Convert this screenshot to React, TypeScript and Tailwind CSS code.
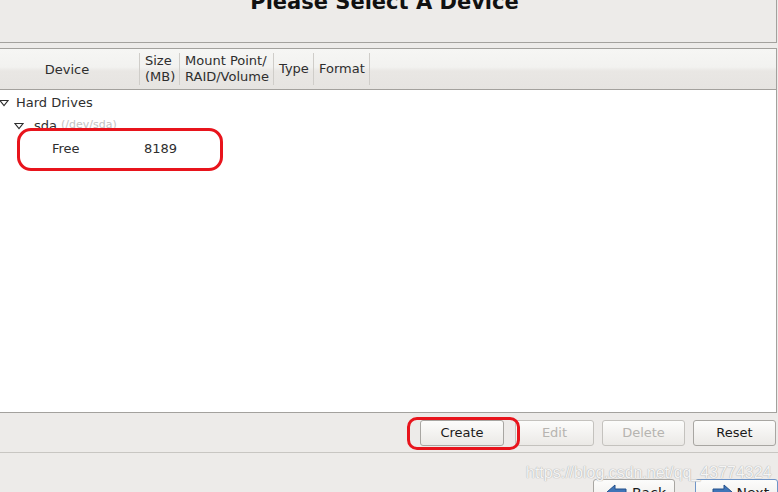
import React from "react";

const Tri = ({ className = "" }: { className?: string }) => (
  <svg width="10" height="8" viewBox="0 0 10 8" className={className}>
    <path d="M1 1.5 L9 1.5 L5 6.5 Z" fill="none" stroke="#2e2e2e" strokeWidth="1.1" strokeLinejoin="miter" />
  </svg>
);

const Btn = ({ label, disabled, className = "" }: { label: string; disabled?: boolean; className?: string }) => (
  <div
    className={`flex items-center justify-center h-[26px] rounded-[3px] border border-[#a8a6a2] bg-[linear-gradient(#fcfcfb,#ebe9e6)] text-[13px] ${
      disabled ? "text-[#b6b4b0] border-[#c4c2be]" : "text-[#1a1a1a]"
    } ${className}`}
  >
    {label}
  </div>
);

const Sep = () => <div className="w-px self-stretch my-[4px] bg-[#cfcdc9]" />;

export default function App() {
  return (
    <div
      className="relative w-[778px] h-[492px] overflow-hidden bg-[#edebe9] text-[#2e2e2e]"
      style={{ fontFamily: '"DejaVu Sans", "Liberation Sans", sans-serif' }}
    >
      {/* Title panel */}
      <div className="h-[43px] w-[777px] border-r border-b border-[#a3a19d] flex justify-center overflow-hidden">
        <div className="text-[21px] font-bold leading-none mt-[-8px] ml-[-7px] text-[#111]">Please Select A Device</div>
      </div>

      {/* Table frame */}
      <div className="mt-[5px] w-[777px] h-[365px] border-t border-r border-b border-[#a3a19d] flex flex-col">
        <div className="h-[41px] flex border-b border-[#a3a19d] bg-[linear-gradient(#f6f6f4_0%,#f2f2f0_45%,#e9e7e4_55%,#e6e4e1_100%)] text-[13px] leading-[16px] text-[#2e2e2e]">
          <div className="w-[139px] flex items-center justify-center pr-[5px] pt-[1px]">Device</div>
          <Sep />
          <div className="w-[39px] flex flex-col justify-center pl-[5px]">
            <span>Size</span>
            <span>(MB)</span>
          </div>
          <Sep />
          <div className="w-[93px] flex flex-col justify-center pl-[5px]">
            <span>Mount Point/</span>
            <span>RAID/Volume</span>
          </div>
          <Sep />
          <div className="w-[39px] flex items-center pl-[5px]">Type</div>
          <Sep />
          <div className="w-[55px] flex items-center pl-[5px]">Format</div>
          <Sep />
          <div className="flex-1" />
        </div>
        <div className="flex-1 bg-white text-[13px] pt-[1px]">
          <div className="h-[23px] flex items-center">
            <Tri className="ml-[-1px] mr-[7px]" />
            <span>Hard Drives</span>
          </div>
          <div className="h-[23px] flex items-center">
            <Tri className="ml-[14px] mr-[10px]" />
            <span>sda</span>
            <span className="ml-[4px] text-[11px] text-[#c3c3c3]">(/dev/sda)</span>
          </div>
          <div className="h-[23px] flex items-center">
            <span className="ml-[52px] w-[92px]">Free</span>
            <span>8189</span>
          </div>
        </div>
      </div>

      {/* Buttons row */}
      <div className="h-[40px] flex items-center pt-[1px] border-b border-[#c8c6c2]">
        <Btn label="Create" className="ml-[420px] w-[84px]" />
        <Btn label="Edit" disabled className="ml-[11px] w-[79px]" />
        <Btn label="Delete" disabled className="ml-[8px] w-[83px]" />
        <Btn label="Reset" className="ml-[8px] w-[83px]" />
      </div>

      {/* Nav buttons */}
      <div className="flex pt-[26px]">
        <div className="ml-[593px] w-[82px] h-[30px] rounded-[3px] border border-[#a8a6a2] bg-[linear-gradient(#fcfcfb,#ebe9e6)] flex items-start pt-[3px] text-[14px] text-[#1a1a1a]">
          <svg width="22" height="16" viewBox="0 0 22 16" className="ml-[12px] mt-[1px]">
            <path d="M1 8 L9 1 L9 5 L20 5 L20 11 L9 11 L9 15 Z" fill="#3f75b8" stroke="#25508a" strokeWidth="1" />
          </svg>
          <span className="ml-[4px]">Back</span>
        </div>
        <div className="ml-[20px] w-[84px] h-[30px] rounded-[3px] border border-[#6f95c8] bg-[linear-gradient(#fcfcfb,#ebe9e6)] flex items-start pt-[3px] text-[14px] text-[#1a1a1a]">
          <svg width="22" height="16" viewBox="0 0 22 16" className="ml-[15px] mt-[1px]">
            <path d="M21 8 L13 1 L13 5 L2 5 L2 11 L13 11 L13 15 Z" fill="#3f75b8" stroke="#25508a" strokeWidth="1" />
          </svg>
          <span className="ml-[4px]">Next</span>
        </div>
      </div>

      {/* Watermark */}
      <div
        className="absolute left-[526px] top-[461px] text-[16px] text-[#f4f4f4]"
        style={{ fontFamily: '"Liberation Sans", sans-serif', textShadow: "0 0 1px #b0b0b0, 0 0 1px #b0b0b0" }}
      >
        https://blog.csdn.net/qq_43774324
      </div>

      {/* Red annotation outlines */}
      <div className="absolute left-[17px] top-[128px] w-[206px] h-[43px] rounded-[14px] border-[3px] border-[#e8141c]" />
      <div className="absolute left-[407px] top-[417px] w-[113px] h-[33px] rounded-[10px] border-[3px] border-[#e8141c]" />
    </div>
  );
}
